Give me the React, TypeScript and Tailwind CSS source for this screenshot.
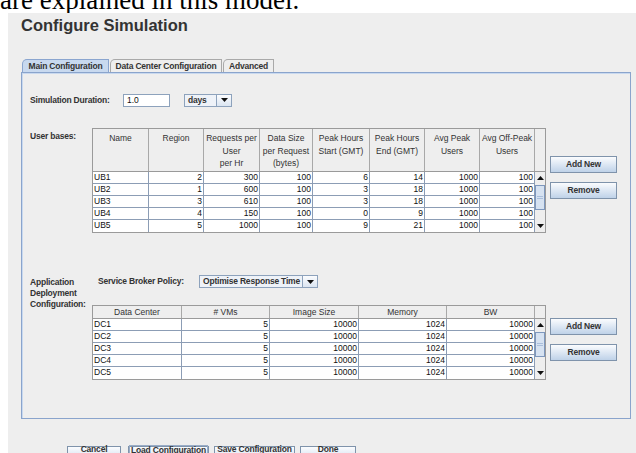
import type { ReactNode } from "react";

const userHeaders = [
  ["Name"],
  ["Region"],
  ["Requests per", "User", "per Hr"],
  ["Data Size", "per Request", "(bytes)"],
  ["Peak Hours", "Start (GMT)"],
  ["Peak Hours", "End (GMT)"],
  ["Avg Peak", "Users"],
  ["Avg Off-Peak", "Users"],
];

const userBases: (string | number)[][] = [
  ["UB1", 2, 300, 100, 6, 14, 1000, 100],
  ["UB2", 1, 600, 100, 3, 18, 1000, 100],
  ["UB3", 3, 610, 100, 3, 18, 1000, 100],
  ["UB4", 4, 150, 100, 0, 9, 1000, 100],
  ["UB5", 5, 1000, 100, 9, 21, 1000, 100],
];

const dcHeaders = ["Data Center", "# VMs", "Image Size", "Memory", "BW"];

const dataCenters: (string | number)[][] = [1, 2, 3, 4, 5].map((n) => [`DC${n}`, 5, 10000, 1024, 10000]);

function Arrow({ up = false }: { up?: boolean }) {
  return (
    <svg width="7" height="4" viewBox="0 0 7 4">
      <polygon points={up ? "0,4 7,4 3.5,0" : "0,0 7,0 3.5,4"} fill="#111" />
    </svg>
  );
}

function MetalButton({ children, className = "", focused = false }: { children: ReactNode; className?: string; focused?: boolean }) {
  return (
    <button className={`flex h-[17px] items-center justify-center border border-[#7f93ab] bg-gradient-to-b from-[#fbfcfe] to-[#bfd2e8] text-[8.5px] font-bold tracking-[-0.2px] text-[#333] ${className}`}>
      <span className={focused ? "border border-[#99acc6] px-[1px] leading-[11px]" : ""}>{children}</span>
    </button>
  );
}

// bottom row sits at the lower edge of the window, labels hug the top
function DialogButton({ children, className = "", focused = false }: { children: ReactNode; className?: string; focused?: boolean }) {
  return (
    <button className={`flex h-[17px] items-start justify-center border border-[#7f93ab] bg-gradient-to-b from-[#fbfcfe] to-[#c9d9ec] text-[8.5px] font-bold tracking-[-0.2px] text-[#333] ${className}`}>
      <span className={`mt-[-2px] leading-[8px] ${focused ? "border border-b-0 border-[#99acc6] px-[1px]" : ""}`}>{children}</span>
    </button>
  );
}

function Combo({ value, className = "" }: { value: string; className?: string }) {
  return (
    <div className={`flex h-[13px] border border-[#8da2bc] bg-[#eef2f8] ${className}`}>
      <div className="flex flex-1 items-center pl-[3px] text-[8.5px] font-bold tracking-[-0.2px] text-[#333]">{value}</div>
      <div className="flex w-[15px] items-center justify-center border-l border-[#8da2bc] bg-gradient-to-b from-[#fbfcfe] to-[#dbe5f1]">
        <Arrow />
      </div>
    </div>
  );
}

function ScrollColumn() {
  return (
    <div className="flex w-[12px] flex-col bg-[#eeeeee]">
      <div className="flex h-[12px] items-center justify-center bg-[#eeeeee]">
        <Arrow up />
      </div>
      <div className="flex-1 pt-[1px]">
        <div className="flex h-[25px] flex-col items-center justify-center gap-[1px] border border-[#7d97bd] bg-[#d6e2f1]">
          <div className="h-px w-[6px] bg-[#a9bedb]" />
          <div className="h-px w-[6px] bg-[#a9bedb]" />
        </div>
      </div>
      <div className="flex h-[12px] items-center justify-center">
        <Arrow />
      </div>
    </div>
  );
}

function DataTable({
  widths,
  headers,
  rows,
  headerHeight,
}: {
  widths: number[];
  headers: string[][];
  rows: (string | number)[][];
  headerHeight: number;
}) {
  return (
    <div className="w-[454px] border border-[#9a9a9a] bg-[#eeeeee] text-[8.5px] text-[#333]">
      <div className="flex border-b border-[#9a9a9a]" style={{ height: headerHeight }}>
        {headers.map((lines, i) => (
          <div
            key={i}
            className={`flex flex-col items-center border-r border-[#a8a8a8] leading-[12.5px] ${headerHeight > 20 ? "pt-[3px]" : "justify-center"}`}
            style={{ width: widths[i] }}
          >
            {lines.map((l) => (
              <span key={l} className="whitespace-nowrap">{l}</span>
            ))}
          </div>
        ))}
        <div className="flex-1" />
      </div>
      <div className="flex">
        <div className="bg-white">
          {rows.map((row, r) => (
            <div key={r} className="flex h-[12px] border-b border-[#8c9db5] last:border-b-0">
              {row.map((cell, c) => (
                <div
                  key={c}
                  className={`border-r border-[#8c9db5] px-[1px] leading-[11px] text-[#111] ${c === 0 ? "text-left" : "text-right"}`}
                  style={{ width: widths[c] }}
                >
                  {cell}
                </div>
              ))}
            </div>
          ))}
        </div>
        <ScrollColumn />
      </div>
    </div>
  );
}

function Tab({ label, width, active = false }: { label: string; width: number; active?: boolean }) {
  return (
    <div
      className={`flex h-[13px] items-center justify-center rounded-tl-[5px] border border-b-0 text-[8.5px] font-bold tracking-[-0.2px] text-[#333] ${
        active ? "border-[#8aa5cf] bg-[#c8d9ef]" : "border-[#a9a9a9] bg-[#eeeeee]"
      }`}
      style={{ width }}
    >
      {label}
    </div>
  );
}

export default function App() {
  return (
    <div className="h-[453px] w-[636px] overflow-hidden bg-white font-['Liberation_Sans',Arial,sans-serif]">
      <div className="h-[13px] overflow-hidden">
        <p className="mt-[-13px] whitespace-nowrap font-['Liberation_Serif','Times_New_Roman',serif] text-[27px] leading-[27px] text-black">
          are explained in this model.
        </p>
      </div>

      <div className="flex h-[440px]">
        <div className="w-[8px] shrink-0 bg-white" />
        <div className="flex-1 bg-[#eeeeee] pl-[13px] pr-[5px] pt-[4px]">
          <h1 className="text-[16.5px] font-bold leading-none text-[#333]">Configure Simulation</h1>

          <div className="mt-[25.5px] flex gap-px pl-px">
            <Tab label="Main Configuration" width={87} active />
            <Tab label="Data Center Configuration" width={112} />
            <Tab label="Advanced" width={51} />
          </div>

          <div className="h-[347px] border border-[#8aa4cc] shadow-[inset_1px_1px_0_#c9d9ef] pl-[8px] pt-[20px]">
            {/* duration */}
            <div className="flex h-[14px] items-center">
              <div className="w-[93px] text-[8.5px] font-bold tracking-[-0.2px] text-[#333]">Simulation Duration:</div>
              <div className="flex h-[13px] w-[47px] items-center border border-[#8da2bc] bg-white pl-[3px] text-[8.5px] text-[#111]">1.0</div>
              <Combo value="days" className="ml-[14px] w-[48px]" />
            </div>

            {/* user bases */}
            <div className="mt-[21px] flex">
              <div className="w-[62px] pt-[2px] text-[8.5px] font-bold tracking-[-0.2px] text-[#333]">User bases:</div>
              <DataTable widths={[56, 55, 56, 53, 57, 55, 55, 55]} headers={userHeaders} rows={userBases} headerHeight={43} />
              <div className="ml-[4px] flex flex-col gap-[9px] pt-[28px]">
                <MetalButton className="w-[67px]">Add New</MetalButton>
                <MetalButton className="w-[67px]">Remove</MetalButton>
              </div>
            </div>

            {/* application deployment */}
            <div className="mt-[42px] flex">
              <div className="w-[62px] pt-[2px] text-[8.5px] font-bold leading-[11px] tracking-[-0.2px] text-[#333]">
                Application
                <br />
                Deployment
                <br />
                Configuration:
              </div>
              <div>
                <div className="flex items-center pl-[6px]">
                  <div className="w-[101px] text-[8.5px] font-bold tracking-[-0.2px] text-[#333]">Service Broker Policy:</div>
                  <Combo value="Optimise Response Time" className="w-[119px]" />
                </div>
                <div className="mt-[17px] flex">
                  <DataTable widths={[89, 88, 89, 88, 88]} headers={dcHeaders.map((h) => [h])} rows={dataCenters} headerHeight={13} />
                  <div className="ml-[4px] flex flex-col gap-[9px] pt-[13px]">
                    <MetalButton className="w-[67px]">Add New</MetalButton>
                    <MetalButton className="w-[67px]">Remove</MetalButton>
                  </div>
                </div>
              </div>
            </div>
          </div>

          <div className="mt-[27px] flex pl-[46px]">
            <DialogButton className="w-[54px]">Cancel</DialogButton>
            <DialogButton className="ml-[7px] w-[81px]" focused>Load Configuration</DialogButton>
            <DialogButton className="ml-[5px] w-[81px]">Save Configuration</DialogButton>
            <DialogButton className="ml-[5px] w-[56px]">Done</DialogButton>
          </div>
        </div>
      </div>
    </div>
  );
}
